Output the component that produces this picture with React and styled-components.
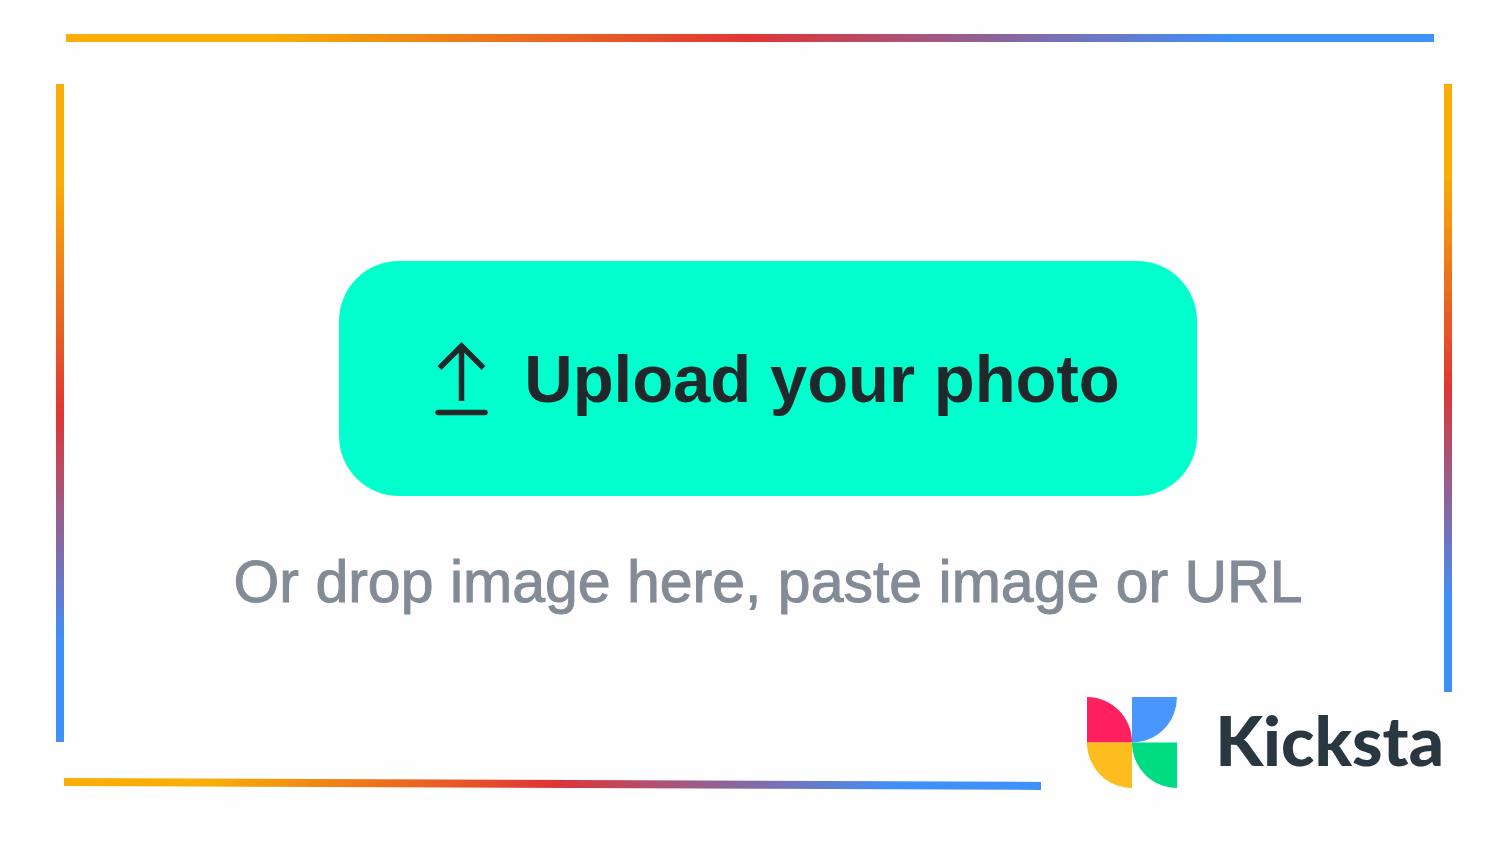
import React from 'react'
import styled, { createGlobalStyle } from 'styled-components'

const GlobalStyle = createGlobalStyle`
  * {
    box-sizing: border-box;
  }

  body {
    margin: 0;
    background-color: #fefefe;
    font-family: "Liberation Sans", Arial, sans-serif;
  }
`

const stops = '#f8ad07 0%, #f8ad07 15%, #e03535 50%, #4090fa 85%, #4090fa 100%'

const Page = styled.div`
  display: flex;
  flex-direction: column;
  gap: 42px;
  min-height: 100vh;
  padding: 34px 48px 56px 56px;
`

const TopRule = styled.div`
  height: 8px;
  margin: 0 18px 0 10px;
  background: linear-gradient(to right, ${stops});
`

const Frame = styled.div`
  flex: 1;
  display: grid;
  grid-template-columns: 8px 1fr 8px;
`

const SideRule = styled.div`
  margin-bottom: ${props => props.$end}px;
  background: linear-gradient(to bottom, ${stops});
`

const Content = styled.div`
  display: flex;
  flex-direction: column;
`

const UploadArea = styled.main`
  flex: 1;
  display: flex;
  flex-direction: column;
  align-items: center;
  justify-content: center;
  gap: 50px;
  padding: 98px 0 0 28px;
`

const UploadButton = styled.button`
  display: flex;
  align-items: center;
  gap: 36px;
  min-height: 235px;
  padding: 0 77px 0 96px;
  border: 0;
  border-radius: 60px;
  background-color: #00ffcc;
  color: #20282b;
  font-family: inherit;
  font-size: 67px;
  font-weight: 700;
  line-height: 76px;
  white-space: nowrap;
  cursor: pointer;
`

const Hint = styled.p`
  margin: 0;
  color: #838b96;
  font-size: 59px;
  line-height: 72px;
  white-space: nowrap;
  -webkit-text-stroke: 1px #838b96;
`

const Footer = styled.footer`
  display: flex;
  align-items: flex-end;
  gap: 46px;
`

// runs slightly downhill towards the logo
const BottomRule = styled.div`
  flex: 1;
  height: 8px;
  background: linear-gradient(to right, ${stops});
  transform: rotate(0.23deg);
`

const Brand = styled.a`
  display: flex;
  align-items: center;
  gap: 38px;
  color: #283740;
  text-decoration: none;
`

const Wordmark = styled.span`
  padding-bottom: 6px;
  font-family: Lato, sans-serif;
  font-size: 69px;
  font-weight: 900;
  line-height: 80px;
`

const UploadIcon = () => (
  <svg
    width="53"
    height="74"
    viewBox="0 0 53 74"
    fill="none"
    stroke="currentColor"
    strokeWidth="5.5"
    aria-hidden="true"
  >
    <path d="M26.5 3V59M4.5 26L26.5 4L48.5 26" />
    <path d="M3 70.5H50" strokeLinecap="round" />
  </svg>
)

const Logo = () => (
  <svg width="90" height="91" viewBox="0 0 90 91" aria-hidden="true">
    <path d="M0 0A45 45.5 0 0 1 45 45.5H0Z" fill="#ff215f" />
    <path d="M45 0H90A45 45.5 0 0 1 45 45.5Z" fill="#4a96ff" />
    <path d="M0 45.5H45V91A45 45.5 0 0 1 0 45.5Z" fill="#fdbd1e" />
    <path d="M45 45.5H90V91A45 45.5 0 0 1 45 45.5Z" fill="#00dc82" />
  </svg>
)

const App = () => {
  return (
    <Page>
      <GlobalStyle />
      <TopRule />
      <Frame>
        <SideRule $end={46} />
        <Content>
          <UploadArea>
            <UploadButton type="button">
              <UploadIcon />
              Upload your photo
            </UploadButton>
            <Hint>Or drop image here, paste image or URL</Hint>
          </UploadArea>
          <Footer>
            <BottomRule />
            <Brand href="#">
              <Logo />
              <Wordmark>Kicksta</Wordmark>
            </Brand>
          </Footer>
        </Content>
        <SideRule $end={96} />
      </Frame>
    </Page>
  )
}

export default App
